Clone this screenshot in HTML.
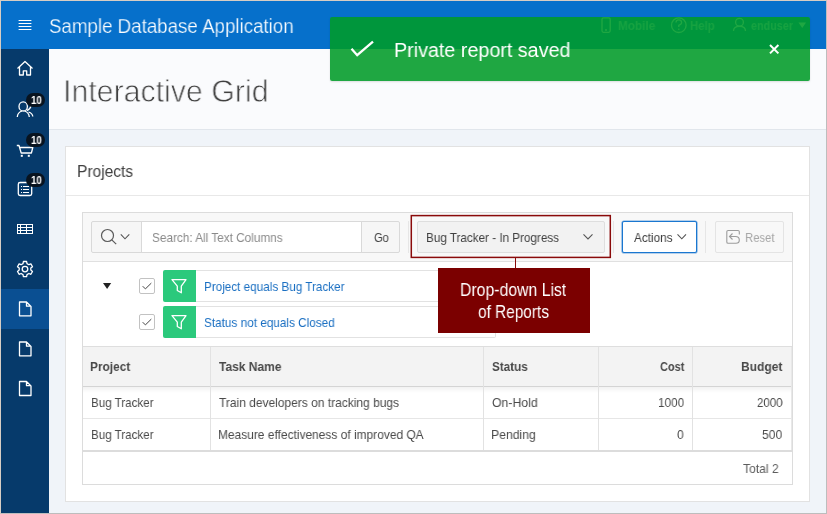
<!DOCTYPE html>
<html><head><meta charset="utf-8">
<style>
*{box-sizing:border-box;margin:0;padding:0}
html,body{width:827px;height:514px;overflow:hidden;background:#f0f4f9;font-family:"Liberation Sans",sans-serif;position:relative}
.a{position:absolute}
.t{position:absolute;white-space:nowrap;transform-origin:0 0;display:block;will-change:transform}
.bm{display:inline-block;width:0;height:0;vertical-align:baseline}
svg{position:absolute;overflow:visible}
</style></head><body>
<!-- header -->
<div class="a" style="left:1px;top:1px;width:825px;height:48px;background:#0670cb"></div>
<svg style="left:0;top:0" width="40" height="40" viewBox="0 0 40 40"><g stroke="#fff" stroke-width="1.05"><path d="M18.6 20.5 H31.4 M18.6 23.5 H31.4 M18.6 26.5 H31.4 M18.6 29.5 H31.4"/></g></svg>
<span id="t_title" class="t" style="left:49.19px;top:16.00px;font-size:20px;line-height:20px;font-weight:400;color:#fff;transform:scaleX(0.9362);-webkit-text-stroke:0.25px #0670cb">Sample Database Application<i class="bm"></i></span>
<svg style="left:0;top:0" width="827" height="50" viewBox="0 0 827 50">
 <g fill="none" stroke="#fff" stroke-width="1.3">
  <rect x="602" y="17.8" width="8.2" height="14.5" rx="1.5"/>
  <line x1="605" y1="30" x2="607" y2="30"/>
  <circle cx="678.8" cy="25.2" r="7.3"/>
  <path d="M676 22.5 Q676 19.8 678.8 19.8 Q681.6 19.8 681.6 22.5 Q681.6 24.3 678.8 25.3 V27"/>
  <circle cx="739.5" cy="22.3" r="3.9"/>
  <path d="M733.5 31 Q733.5 26.3 739.5 26.3 Q745.5 26.3 745.5 31"/>
 </g>
 <circle cx="678.8" cy="29.3" r="0.8" fill="#fff"/>
 <path d="M798.5 22.5 H806 L802.25 28 Z" fill="#fff"/>
</svg>
<span id="t_mob" class="t" style="left:617.70px;top:20.00px;font-size:12.5px;line-height:12.5px;font-weight:700;color:#fff;transform:scaleX(0.9376);opacity:.7">Mobile<i class="bm"></i></span>
<span id="t_help" class="t" style="left:689.82px;top:20.00px;font-size:12.5px;line-height:12.5px;font-weight:700;color:#fff;transform:scaleX(0.9094);opacity:.7">Help<i class="bm"></i></span>
<span id="t_user" class="t" style="left:751.34px;top:20.00px;font-size:12.5px;line-height:12.5px;font-weight:700;color:#fff;transform:scaleX(0.8659);opacity:.7">enduser<i class="bm"></i></span>
<!-- nav -->
<div class="a" style="left:1px;top:49px;width:48px;height:464px;background:#063a6b"></div>
<div class="a" style="left:1px;top:289px;width:48px;height:40px;background:#0a4f92"></div>
<svg style="left:0;top:0" width="50" height="514" viewBox="0 0 50 514">
 <g fill="none" stroke="#fff" stroke-width="1.3" stroke-linejoin="round">
  <path d="M17.5 68.5 L25 61.5 L32.5 68.5"/>
  <path d="M19.5 66.5 V75 H23.3 V70.8 H26.7 V75 H30.5 V66.5"/>
  <ellipse cx="23.2" cy="106.4" rx="4.2" ry="4.6"/>
  <path d="M17.3 117 C17.5 113.5 19.5 111.8 22 111 M24.5 111 C27 111.8 29 113.5 29.3 117"/>
  <path d="M26.8 110.6 C29 109.5 30.6 108 30.8 106.3"/>
  <path d="M28.5 112 C31 112.8 32.6 114 32.8 116.5"/>
  <path d="M16.8 145.5 H19 L21.2 153 H31.4 L32.8 147.5 H19.8"/>
  <rect x="18.3" y="182.5" width="13.4" height="13" rx="1.8"/>

  <path id="gear" d="M23.4 261.5 H26.6 L27 263.6 L28.9 264.7 L30.9 263.9 L32.5 266.7 L30.8 268.1 V270.1 L32.5 271.5 L30.9 274.3 L28.9 273.5 L27 274.6 L26.6 276.7 H23.4 L23 274.6 L21.1 273.5 L19.1 274.3 L17.5 271.5 L19.2 270.1 V268.1 L17.5 266.7 L19.1 263.9 L21.1 264.7 L23 263.6 Z"/>
  <circle cx="25" cy="269.1" r="2.8"/>
  <path d="M19.5 302 H26.5 L31 306.5 V315.8 H19.5 Z M26.5 302 V306.2 H31"/>
  <path d="M19.5 342 H26.5 L31 346.5 V355.8 H19.5 Z M26.5 342 V346.2 H31"/>
  <path d="M19.5 381.5 H26.5 L31 386 V395.5 H19.5 Z M26.5 381.5 V385.7 H31"/>
 </g>
 <g fill="#fff">
  <path fill-rule="evenodd" d="M17 224 h16 v10 h-16 z M18 225 h2 v2 h-2 z M21 225 h5 v2 h-5 z M27 225 h5 v2 h-5 z M18 228 h2 v2 h-2 z M21 228 h5 v2 h-5 z M27 228 h5 v2 h-5 z M18 231 h2 v2 h-2 z M21 231 h5 v2 h-5 z M27 231 h5 v2 h-5 z"/>
  <rect x="20.8" y="154.8" width="2" height="2"/>
  <rect x="27.8" y="154.8" width="2" height="2"/>
  <path d="M21 186 h1 v1 h-1z M21 189 h1 v1 h-1z M21 192 h1 v1 h-1z" />
  <rect x="23" y="186" width="6" height="1"/>
  <rect x="23" y="189" width="6" height="1"/>
  <rect x="23" y="192" width="6" height="1"/>
 </g>
</svg>
<div class="a" style="left:26px;top:93px;width:19px;height:14px;border-radius:7px;background:#08131f"></div>
<div class="a" style="left:26px;top:133px;width:19px;height:14px;border-radius:7px;background:#08131f"></div>
<div class="a" style="left:26px;top:173px;width:19px;height:14px;border-radius:7px;background:#08131f"></div>
<span id="t_b1" class="t" style="left:30.78px;top:95.00px;font-size:10.5px;line-height:10.5px;font-weight:700;color:#fff;transform:scaleX(0.9285);">10<i class="bm"></i></span>
<span id="t_b2" class="t" style="left:30.78px;top:135.01px;font-size:10.5px;line-height:10.5px;font-weight:700;color:#fff;transform:scaleX(0.9285);">10<i class="bm"></i></span>
<span id="t_b3" class="t" style="left:30.78px;top:175.01px;font-size:10.5px;line-height:10.5px;font-weight:700;color:#fff;transform:scaleX(0.9285);">10<i class="bm"></i></span>
<!-- title bar -->
<div class="a" style="left:49px;top:49px;width:777px;height:81px;background:#fafbfd;border-bottom:1px solid #e1e6ec"></div>
<span id="t_ig" class="t" style="left:62.54px;top:75.00px;font-size:32px;line-height:32px;font-weight:400;color:#404040;transform:scaleX(0.9472);-webkit-text-stroke:0.8px #fafbfd">Interactive Grid<i class="bm"></i></span>
<!-- card -->
<div class="a" style="left:65px;top:146px;width:745px;height:356px;background:#fff;border:1px solid #e2e2e2"></div>
<div class="a" style="left:66px;top:195px;width:743px;height:1px;background:#e8e8e8"></div>
<span id="t_proj" class="t" style="left:77.23px;top:164.00px;font-size:16px;line-height:16px;font-weight:400;color:#404040;transform:scaleX(0.9713);">Projects<i class="bm"></i></span>
<!-- grid -->
<div class="a" style="left:82px;top:212px;width:711px;height:273px;background:#fff;border:1px solid #dcdcdc"></div>
<div class="a" style="left:83px;top:213px;width:709px;height:49px;background:#f8f8f8;border-bottom:1px solid #e0e0e0"></div>
<div class="a" style="left:91px;top:221px;width:51px;height:32px;background:#f6f6f6;border:1px solid #d9d9d9;border-radius:2px 0 0 2px"></div>
<div class="a" style="left:141px;top:221px;width:221px;height:32px;background:#fff;border:1px solid #d9d9d9"></div>
<div class="a" style="left:361px;top:221px;width:39px;height:32px;background:#f6f6f6;border:1px solid #d9d9d9;border-radius:0 2px 2px 0"></div>
<div class="a" style="left:408px;top:221px;width:1px;height:32px;background:#e6e6e6"></div>
<div class="a" style="left:417px;top:221px;width:188px;height:32px;background:#f2f2f2;border:1px solid #dedede;border-radius:2px"></div>
<div class="a" style="left:613px;top:221px;width:1px;height:32px;background:#e6e6e6"></div>
<div class="a" style="left:622px;top:221px;width:75px;height:32px;background:#fff;border:1px solid #1a77d0;border-radius:2px;box-shadow:0 0 0 0.6px rgba(26,119,208,.6)"></div>
<div class="a" style="left:705px;top:221px;width:1px;height:32px;background:#e6e6e6"></div>
<div class="a" style="left:715px;top:221px;width:69px;height:32px;background:#f8f8f8;border:1px solid #e4e4e4;border-radius:2px"></div>
<svg style="left:0;top:0" width="827" height="514" viewBox="0 0 827 514">
 <g fill="none" stroke="#5a5a5a" stroke-width="1.2">
  <circle cx="107.5" cy="235.5" r="6"/>
  <line x1="111.8" y1="239.8" x2="116.2" y2="244.2"/>
 </g>
 <g fill="none" stroke="#555" stroke-width="1.1">
  <path d="M120.8 234.3 L125 238.8 L129.3 234.3"/>
  <path d="M583.5 234.3 L588 238.9 L592.5 234.3"/>
  <path d="M677.5 234.3 L681.8 238.8 L686 234.3"/>
 </g>
 <g fill="none" stroke="#9c9c9c" stroke-width="1.1">
  <path d="M739.3 234.5 V231.8 Q739.3 230.5 738 230.5 H728.1 Q726.8 230.5 726.8 231.8 V242 Q726.8 243.3 728.1 243.3 H736 Q739.3 243.3 739.3 240 Q739.3 236.5 735.5 236.5 H729.8 M732.5 233.5 L729.5 236.5 L732.5 239.5"/>
 </g>
</svg>
<span id="t_search" class="t" style="left:152.20px;top:231.01px;font-size:13px;line-height:13px;font-weight:400;color:#8a8a8a;transform:scaleX(0.9055);">Search: All Text Columns<i class="bm"></i></span>
<span id="t_go" class="t" style="left:373.52px;top:231.01px;font-size:13px;line-height:13px;font-weight:400;color:#404040;transform:scaleX(0.8532);">Go<i class="bm"></i></span>
<span id="t_sel" class="t" style="left:425.59px;top:231.01px;font-size:13px;line-height:13px;font-weight:400;color:#404040;transform:scaleX(0.8984);">Bug Tracker - In Progress<i class="bm"></i></span>
<span id="t_act" class="t" style="left:634.33px;top:231.01px;font-size:13px;line-height:13px;font-weight:400;color:#404040;transform:scaleX(0.9010);">Actions<i class="bm"></i></span>
<span id="t_reset" class="t" style="left:744.61px;top:231.01px;font-size:13px;line-height:13px;font-weight:400;color:#a8a8a8;transform:scaleX(0.8711);">Reset<i class="bm"></i></span>
<!-- filters -->
<svg style="left:0;top:0" width="827" height="514" viewBox="0 0 827 514">
 <path d="M103 283 H111.2 L107.1 289 Z" fill="#222"/>
</svg>
<div class="a" style="left:139px;top:278px;width:16px;height:16px;border:1px solid #c2c2c2;border-radius:2px;background:#fff"></div>
<div class="a" style="left:139px;top:314px;width:16px;height:16px;border:1px solid #c2c2c2;border-radius:2px;background:#fff"></div>
<div class="a" style="left:163px;top:270px;width:33px;height:32px;background:#2bc97c;border-radius:2px 0 0 2px"></div>
<div class="a" style="left:163px;top:306px;width:33px;height:32px;background:#2bc97c;border-radius:2px 0 0 2px"></div>
<div class="a" style="left:196px;top:270px;width:300px;height:32px;border:1px solid #e2e2e2;border-left:0;border-radius:0 2px 2px 0"></div>
<div class="a" style="left:196px;top:306px;width:300px;height:32px;border:1px solid #e2e2e2;border-left:0;border-radius:0 2px 2px 0"></div>
<svg style="left:0;top:0" width="827" height="514" viewBox="0 0 827 514">
 <g fill="none" stroke="#444" stroke-width="1">
  <path d="M142.7 286.2 L145.4 288.9 L151.3 283.1"/>
  <path d="M142.7 322.2 L145.4 324.9 L151.3 319.1"/>
 </g>
 <g fill="none" stroke="#fff" stroke-width="1.3" stroke-linejoin="round">
  <path d="M172 279.6 H186 L181.3 286.2 V292.8 L177.3 290.5 V286.2 Z"/>
  <path d="M172 315.6 H186 L181.3 322.2 V328.8 L177.3 326.5 V322.2 Z"/>
 </g>
</svg>
<span id="t_f1" class="t" style="left:204.42px;top:280.01px;font-size:13px;line-height:13px;font-weight:400;color:#1a6fc2;transform:scaleX(0.9003);">Project equals Bug Tracker<i class="bm"></i></span>
<span id="t_f2" class="t" style="left:204.36px;top:316.00px;font-size:13px;line-height:13px;font-weight:400;color:#1a6fc2;transform:scaleX(0.9050);">Status not equals Closed<i class="bm"></i></span>
<!-- table -->
<div class="a" style="left:83px;top:346px;width:709px;height:41px;background:#f3f3f3;border-top:1px solid #dedede;border-bottom:1px solid #d4d4d4"></div>
<div class="a" style="left:83px;top:387px;width:709px;height:6px;background:linear-gradient(rgba(0,0,0,.05),rgba(0,0,0,0))"></div>
<div class="a" style="left:83px;top:418px;width:709px;height:1px;background:#e6e6e6"></div>
<div class="a" style="left:83px;top:450px;width:709px;height:2px;background:#dcdcdc"></div>
<div class="a" style="left:210px;top:347px;width:1px;height:103px;background:#e2e2e2"></div>
<div class="a" style="left:483px;top:347px;width:1px;height:103px;background:#e2e2e2"></div>
<div class="a" style="left:598px;top:347px;width:1px;height:103px;background:#e2e2e2"></div>
<div class="a" style="left:692px;top:347px;width:1px;height:103px;background:#e2e2e2"></div>
<div class="a" style="left:791px;top:347px;width:1px;height:103px;background:#e8e8e8"></div>
<span id="t_h1" class="t" style="left:90.44px;top:360.01px;font-size:13.5px;line-height:13.5px;font-weight:700;color:#484848;transform:scaleX(0.8797);">Project<i class="bm"></i></span>
<span id="t_h2" class="t" style="left:218.88px;top:360.00px;font-size:13.5px;line-height:13.5px;font-weight:700;color:#484848;transform:scaleX(0.8895);">Task Name<i class="bm"></i></span>
<span id="t_h3" class="t" style="left:491.61px;top:360.01px;font-size:13.5px;line-height:13.5px;font-weight:700;color:#484848;transform:scaleX(0.8664);">Status<i class="bm"></i></span>
<span id="t_h4" class="t" style="left:659.54px;top:360.01px;font-size:13.5px;line-height:13.5px;font-weight:700;color:#484848;transform:scaleX(0.8119);">Cost<i class="bm"></i></span>
<span id="t_h5" class="t" style="left:740.70px;top:360.01px;font-size:13.5px;line-height:13.5px;font-weight:700;color:#484848;transform:scaleX(0.8914);">Budget<i class="bm"></i></span>
<span id="t_r11" class="t" style="left:90.70px;top:396.00px;font-size:13px;line-height:13px;font-weight:400;color:#4a4a4a;transform:scaleX(0.8924);">Bug Tracker<i class="bm"></i></span>
<span id="t_r12" class="t" style="left:218.88px;top:396.01px;font-size:13px;line-height:13px;font-weight:400;color:#4a4a4a;transform:scaleX(0.9217);">Train developers on tracking bugs<i class="bm"></i></span>
<span id="t_r13" class="t" style="left:492.00px;top:396.01px;font-size:13px;line-height:13px;font-weight:400;color:#4a4a4a;transform:scaleX(0.9442);">On-Hold<i class="bm"></i></span>
<span id="t_r14" class="t" style="left:657.73px;top:396.00px;font-size:13px;line-height:13px;font-weight:400;color:#4a4a4a;transform:scaleX(0.9046);">1000<i class="bm"></i></span>
<span id="t_r15" class="t" style="left:756.67px;top:396.00px;font-size:13px;line-height:13px;font-weight:400;color:#4a4a4a;transform:scaleX(0.8819);">2000<i class="bm"></i></span>
<span id="t_r21" class="t" style="left:90.70px;top:428.01px;font-size:13px;line-height:13px;font-weight:400;color:#4a4a4a;transform:scaleX(0.8924);">Bug Tracker<i class="bm"></i></span>
<span id="t_r22" class="t" style="left:217.66px;top:428.01px;font-size:13px;line-height:13px;font-weight:400;color:#4a4a4a;transform:scaleX(0.9191);">Measure effectiveness of improved QA<i class="bm"></i></span>
<span id="t_r23" class="t" style="left:491.35px;top:428.01px;font-size:13px;line-height:13px;font-weight:400;color:#4a4a4a;transform:scaleX(0.9383);">Pending<i class="bm"></i></span>
<span id="t_r24" class="t" style="left:677.13px;top:428.00px;font-size:13px;line-height:13px;font-weight:400;color:#4a4a4a;transform:scaleX(0.9264);">0<i class="bm"></i></span>
<span id="t_r25" class="t" style="left:762.06px;top:428.00px;font-size:13px;line-height:13px;font-weight:400;color:#4a4a4a;transform:scaleX(0.9303);">500<i class="bm"></i></span>
<span id="t_total" class="t" style="left:743.00px;top:462.00px;font-size:13px;line-height:13px;font-weight:400;color:#5c5c5c;transform:scaleX(0.9338);">Total 2<i class="bm"></i></span>
<!-- callout -->
<svg style="left:0;top:0" width="827" height="514" viewBox="0 0 827 514">
 <rect x="411.3" y="215.6" width="199" height="41.8" fill="none" stroke="#8a0a0a" stroke-width="1.5"/>
 <line x1="515.5" y1="257" x2="515.5" y2="268" stroke="#8a0a0a" stroke-width="1"/>
</svg>
<div class="a" style="left:438px;top:268px;width:152px;height:65px;background:#7b0000"></div>
<span id="t_c1" class="t" style="left:459.66px;top:281.00px;font-size:18.3px;line-height:18.3px;font-weight:400;color:#fff;transform:scaleX(0.8639);">Drop-down List<i class="bm"></i></span>
<span id="t_c2" class="t" style="left:477.72px;top:303.00px;font-size:18.3px;line-height:18.3px;font-weight:400;color:#fff;transform:scaleX(0.8415);">of Reports<i class="bm"></i></span>
<!-- toast -->
<div class="a" style="left:330px;top:17px;width:480px;height:64px;background:rgba(0,155,40,.88);border-radius:2px;box-shadow:0 1px 2px rgba(0,0,0,.12)"></div>
<svg style="left:0;top:0" width="827" height="514" viewBox="0 0 827 514">
 <path d="M351.5 48.8 L357.2 55.2 L373 41.6" fill="none" stroke="#fff" stroke-width="2.3"/>
 <path d="M770 45 L778.4 53.4 M778.4 45 L770 53.4" fill="none" stroke="#fff" stroke-width="2"/>
</svg>
<span id="t_toast" class="t" style="left:393.83px;top:40.00px;font-size:20px;line-height:20px;font-weight:400;color:#fff;transform:scaleX(0.9860);">Private report saved<i class="bm"></i></span>
<div class="a" style="left:0;top:0;width:827px;height:514px;border-top:1px solid #d6cdc4;border-left:1px solid #d6cdc4;border-right:1px solid #bdbdbd;border-bottom:1px solid #bdbdbd"></div>
</body></html>
